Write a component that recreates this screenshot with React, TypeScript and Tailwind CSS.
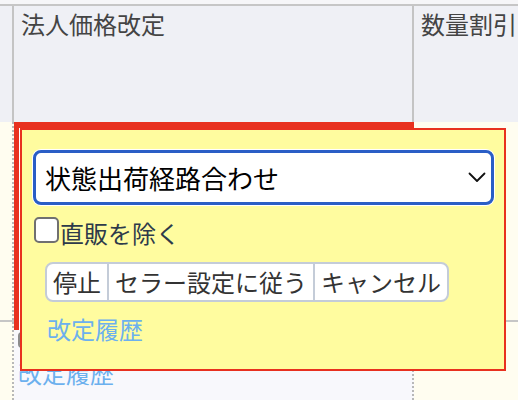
const font = { fontFamily: '"Noto Sans CJK JP", "Noto Sans", sans-serif' };

function Popup() {
  return (
    <div className="absolute left-[20px] top-[128px] w-[486px] h-[243px] border-2 border-[#e8311f] bg-[#fffc9f]">
      <div className="ml-[11px] mt-[20px] w-[461px] h-[55px] flex items-center justify-between rounded-[8px] border-[3px] border-[#2a5ec6] bg-white pl-[9px] pr-[5px] shadow-[0_0_0_1px_white]">
        <span className="text-[26px] leading-[32px] text-black">状態出荷経路合わせ</span>
        <svg width="18" height="11" viewBox="0 0 18 11" fill="none">
          <path d="M1.5 1.5 L9 9 L16.5 1.5" stroke="#111" strokeWidth="1.8" strokeLinecap="round" strokeLinejoin="round" />
        </svg>
      </div>
      <div className="mt-[12px] ml-[12px] flex items-start">
        <div className="w-[25px] h-[26px] rounded-[5px] border-2 border-[#707070] bg-white" />
        <span className="ml-[1px] text-[24px] leading-[32px] text-[#2d3a4a]">直販を除く</span>
      </div>
      <div className="mt-[13px] ml-[23px] inline-flex h-[40px] rounded-[8px] border-2 border-[#c4ccd8] bg-white text-[24px] leading-[36px] text-[#333]">
        <span className="px-[6px]">停止</span>
        <span className="px-[6px] border-l-2 border-[#c4ccd8]">セラー設定に従う</span>
        <span className="px-[6px] border-l-2 border-[#c4ccd8]">キャンセル</span>
      </div>
      <div className="mt-[11px] ml-[25px] text-[24px] leading-[32px] text-[#6cb0ee]">改定履歴</div>
    </div>
  );
}

export default function App() {
  return (
    <div className="relative w-[518px] h-[400px] overflow-hidden bg-[#f6f6f8]" style={font}>
      <div className="h-[4px]" />
      {/* header row */}
      <div className="flex h-[118px] border-t-2 border-[#c6c6c6] bg-[#eff0f5] text-[24px] leading-[32px] text-[#444]">
        <div className="w-[14px] border-r-2 border-[#c4c4c4]" />
        <div className="w-[400px] border-r-2 border-[#c4c4c4] pl-[7px] pt-[2px]">法人価格改定</div>
        <div className="flex-1 pl-[7px] pt-[2px] whitespace-nowrap">数量割引</div>
      </div>
      {/* body row 1 */}
      <div className="flex h-[198px] bg-[#fffdf0]">
        <div className="w-[14px] border-r-2 border-dotted border-[#b8b8b8]" />
        <div className="relative w-[400px] border-r-2 border-dotted border-[#b8b8b8]">
          <div className="absolute left-0 top-0 w-[400px] h-[208px] border-l-[5px] border-t-[6px] border-[#e8311f] bg-white" />
        </div>
        <div className="flex-1" />
      </div>
      {/* body row 2 */}
      <div className="flex h-[80px] border-t-2 border-[#c6c6c6] bg-[#fffdf0]">
        <div className="w-[14px] border-r-2 border-dotted border-[#b8b8b8]" />
        <div className="w-[400px] border-r-2 border-dotted border-[#b8b8b8] bg-[#f8f8fc] pl-[4px] pt-[10px]">
          <div className="w-[24px] h-[16px] rounded-[4px] bg-[#8c8c8c]" />
          <div className="mt-[9px] text-[24px] leading-[32px] text-[#6cb0ee]">改定履歴</div>
        </div>
        <div className="flex-1" />
      </div>
      <Popup />
    </div>
  );
}
